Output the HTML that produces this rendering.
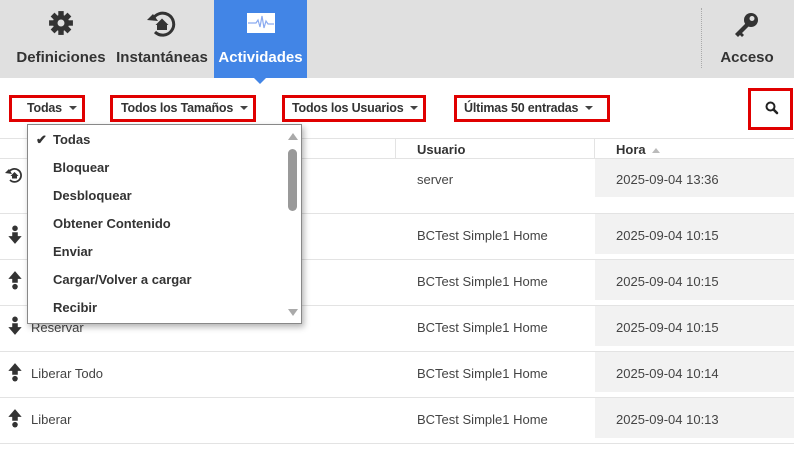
<!DOCTYPE html>
<html><head><meta charset="utf-8"><style>
*{margin:0;padding:0;box-sizing:border-box}
body{width:794px;height:452px;overflow:hidden;background:#fff;font-family:"Liberation Sans",sans-serif;color:#333;position:relative}
.nav{position:absolute;left:0;top:0;width:794px;height:78px;background:#e0e0e0}
.ni{position:absolute;top:0;height:78px;text-align:center;font-weight:bold;font-size:15px;color:#333}
.ni .lb{position:absolute;left:-5px;right:-5px;top:49px}
.act{background:#4285e6;color:#fff}
.ab{position:absolute;font-size:12.5px;font-weight:bold;color:#333;white-space:nowrap;letter-spacing:-0.2px}
.rb{position:absolute;border:3px solid #e00000}
.car{display:inline-block;width:0;height:0;border-left:4px solid transparent;border-right:4px solid transparent;border-top:4px solid #444;vertical-align:middle;margin-left:7px;margin-top:-2px}
.hl{position:absolute;left:0;width:794px;height:1px;background:#e3e3e3}
.t{position:absolute;font-size:13px;color:#444;white-space:nowrap}
.g{position:absolute;left:595px;width:199px;background:#f2f2f2}
.dd{position:absolute;left:27px;top:124px;width:275px;height:200px;background:#fff;border:1px solid #888;box-shadow:2px 3px 6px rgba(0,0,0,.3)}
.di{position:absolute;left:25px;font-size:13px;font-weight:bold;color:#333}
</style></head><body>
<div class="nav">
 <div class="ni" style="left:12px;width:98px">
  <svg style="position:absolute;left:36px;top:10px" width="26" height="26" viewBox="0 0 24 24"><g fill="#333"><circle cx="12" cy="12" r="7.5"/><rect x="9.5" y="1" width="5" height="22"/><rect x="1" y="9.5" width="22" height="5"/><rect x="9.5" y="1" width="5" height="22" transform="rotate(45 12 12)"/><rect x="9.5" y="1" width="5" height="22" transform="rotate(-45 12 12)"/></g><circle cx="12" cy="12" r="3.2" fill="#e0e0e0"/></svg>
  <div class="lb">Definiciones</div></div>
 <div class="ni" style="left:113px;width:98px">
  <svg style="position:absolute;left:33px;top:8px" width="32" height="32" viewBox="0 0 32 32"><path d="M6.5 12 A11 11 0 1 1 9 24" fill="none" stroke="#333" stroke-width="3"/><path d="M1 12 L7 6 L12 13 Z" fill="#333"/><path d="M9.5 17 L16 10.5 L22.5 17 L21 17 L21 22 L11 22 L11 17Z" fill="#333"/></svg>
  <div class="lb">Instantáneas</div></div>
 <div class="ni act" style="left:214px;width:93px">
  <svg style="position:absolute;left:33px;top:13px" width="28" height="20" viewBox="0 0 28 20"><rect width="28" height="20" fill="#fff"/><path d="M1 10 H9 L11 7 L13 14 L15 3 L17 15 L19 8 L21 11 H27" fill="none" stroke="#8aaaf0" stroke-width="1.2"/></svg>
  <div class="lb">Actividades</div></div>
 <div style="position:absolute;top:78px;width:0;height:0;border-left:6px solid transparent;border-right:6px solid transparent;border-top:6px solid #4285e6;left:254px"></div>
 <div style="position:absolute;left:701px;top:8px;height:60px;border-left:1px dotted #aaa"></div>
 <div class="ni" style="left:710px;width:74px">
  <svg style="position:absolute;left:22px;top:11px" width="30" height="28" viewBox="0 0 30 28"><circle cx="19" cy="9" r="7" fill="#333"/><circle cx="20" cy="7.5" r="2.5" fill="#e0e0e0"/><path d="M14 12 L3 23 L6 26 L8 24 L10 26 L12 24 L10 22 L17 15Z" fill="#333"/></svg>
  <div class="lb">Acceso</div></div>
</div>

<div class="rb" style="left:9px;top:95px;width:76px;height:27px"></div>
<div class="ab" style="left:27px;top:101px">Todas<span class="car"></span></div>
<div class="rb" style="left:110px;top:95px;width:146px;height:27px"></div>
<div class="ab" style="left:121px;top:101px">Todos los Tamaños<span class="car"></span></div>
<div class="rb" style="left:282px;top:95px;width:144px;height:27px"></div>
<div class="ab" style="left:292px;top:101px">Todos los Usuarios<span class="car"></span></div>
<div class="rb" style="left:454px;top:95px;width:156px;height:27px"></div>
<div class="ab" style="left:464px;top:101px">Últimas 50 entradas<span class="car"></span></div>
<div class="rb" style="left:748px;top:88px;width:45px;height:42px"></div>
<svg style="position:absolute;left:765px;top:101px" width="14" height="14" viewBox="0 0 14 14"><circle cx="5.5" cy="5.5" r="4" fill="none" stroke="#222" stroke-width="2"/><path d="M8.5 8.5 L12 12" stroke="#222" stroke-width="2.6" stroke-linecap="round"/></svg>

<div class="hl" style="top:138px"></div>
<div style="position:absolute;left:395px;top:139px;width:1px;height:20px;background:#e3e3e3"></div>
<div style="position:absolute;left:594px;top:139px;width:1px;height:20px;background:#e3e3e3"></div>
<div class="t" style="left:417px;top:142px;font-weight:bold;color:#333">Usuario</div>
<div class="t" style="left:616px;top:142px;font-weight:bold;color:#333">Hora <span style="display:inline-block;border-left:4px solid transparent;border-right:4px solid transparent;border-bottom:5px solid #bbb;vertical-align:middle;margin-left:3px"></span></div>
<div class="hl" style="top:158px"></div>

<div class="g" style="top:159px;height:38px"></div>
<div class="g" style="top:214px;height:40px"></div>
<div class="g" style="top:260px;height:40px"></div>
<div class="g" style="top:306px;height:40px"></div>
<div class="g" style="top:352px;height:40px"></div>
<div class="g" style="top:398px;height:40px"></div>
<div class="hl" style="top:213px"></div>
<div class="hl" style="top:259px"></div>
<div class="hl" style="top:305px"></div>
<div class="hl" style="top:351px"></div>
<div class="hl" style="top:397px"></div>
<div class="hl" style="top:443px"></div>

<div class="t" style="left:417px;top:172px">server</div><div class="t" style="left:616px;top:172px">2025-09-04 13:36</div>
<div class="t" style="left:417px;top:228px">BCTest Simple1 Home</div><div class="t" style="left:616px;top:228px">2025-09-04 10:15</div>
<div class="t" style="left:417px;top:274px">BCTest Simple1 Home</div><div class="t" style="left:616px;top:274px">2025-09-04 10:15</div>
<div class="t" style="left:417px;top:320px">BCTest Simple1 Home</div><div class="t" style="left:616px;top:320px">2025-09-04 10:15</div>
<div class="t" style="left:417px;top:366px">BCTest Simple1 Home</div><div class="t" style="left:616px;top:366px">2025-09-04 10:14</div>
<div class="t" style="left:417px;top:412px">BCTest Simple1 Home</div><div class="t" style="left:616px;top:412px">2025-09-04 10:13</div>
<div class="t" style="left:31px;top:320px">Reservar</div>
<div class="t" style="left:31px;top:366px">Liberar Todo</div>
<div class="t" style="left:31px;top:412px">Liberar</div>

<svg style="position:absolute;left:5px;top:166px" width="18" height="18" viewBox="0 0 18 18"><path d="M4 6 A6.5 6.5 0 1 1 5 14" fill="none" stroke="#333" stroke-width="1.8"/><path d="M0 7 L4 3 L7 8Z" fill="#333"/><path d="M5.5 10 L9.5 6 L13.5 10 L12 10 L12 12.5 L7 12.5 L7 10Z" fill="#333"/></svg>
<svg style="position:absolute;left:7px;top:225px" width="16" height="20" viewBox="0 0 14 18"><circle cx="7" cy="3" r="2.5" fill="#333"/><path d="M4.5 6.5 H9.5 V10 H13 L7 17 L1 10 H4.5Z" fill="#333"/></svg>
<svg style="position:absolute;left:7px;top:270px" width="16" height="20" viewBox="0 0 14 18"><circle cx="7" cy="15" r="2.5" fill="#333"/><path d="M4.5 11.5 H9.5 V8 H13 L7 1 L1 8 H4.5Z" fill="#333"/></svg>
<svg style="position:absolute;left:7px;top:316px" width="16" height="20" viewBox="0 0 14 18"><circle cx="7" cy="3" r="2.5" fill="#333"/><path d="M4.5 6.5 H9.5 V10 H13 L7 17 L1 10 H4.5Z" fill="#333"/></svg>
<svg style="position:absolute;left:7px;top:362px" width="16" height="20" viewBox="0 0 14 18"><circle cx="7" cy="15" r="2.5" fill="#333"/><path d="M4.5 11.5 H9.5 V8 H13 L7 1 L1 8 H4.5Z" fill="#333"/></svg>
<svg style="position:absolute;left:7px;top:408px" width="16" height="20" viewBox="0 0 14 18"><circle cx="7" cy="15" r="2.5" fill="#333"/><path d="M4.5 11.5 H9.5 V8 H13 L7 1 L1 8 H4.5Z" fill="#333"/></svg>

<div class="dd">
 <div class="di" style="left:8px;top:7px">✔</div>
 <div class="di" style="top:7px">Todas</div>
 <div class="di" style="top:35px">Bloquear</div>
 <div class="di" style="top:63px">Desbloquear</div>
 <div class="di" style="top:91px">Obtener Contenido</div>
 <div class="di" style="top:119px">Enviar</div>
 <div class="di" style="top:147px">Cargar/Volver a cargar</div>
 <div class="di" style="top:175px">Recibir</div>
 <div style="position:absolute;left:260px;top:8px;border-left:5px solid transparent;border-right:5px solid transparent;border-bottom:7px solid #aaa"></div>
 <div style="position:absolute;left:260px;top:24px;width:9px;height:62px;border-radius:5px;background:#999"></div>
 <div style="position:absolute;left:260px;top:184px;border-left:5px solid transparent;border-right:5px solid transparent;border-top:7px solid #aaa"></div>
</div>
</body></html>
